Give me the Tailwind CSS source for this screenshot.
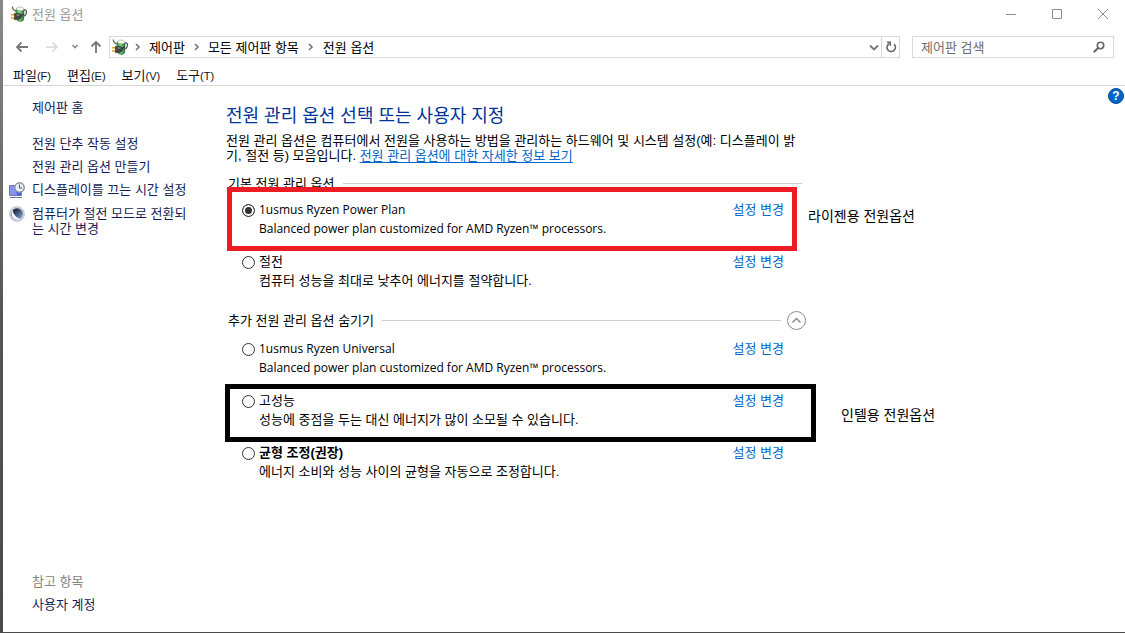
<!DOCTYPE html>
<html lang="ko">
<head>
  <meta charset="UTF-8" />
  <meta name="viewport" content="width=device-width, initial-scale=1.0" />
  <title>전원 옵션</title>
  <script src="https://cdn.jsdelivr.net/npm/@tailwindcss/browser@4"></script>
</head>
<body class="bg-[#5c5c5c] text-black font-['Liberation_Sans','Noto_Sans_CJK_KR',sans-serif] text-[13px] leading-[15px]">
  <!-- Shared icon -->
  <svg class="absolute size-0" aria-hidden="true">
    <defs>
      <linearGradient id="battery" x1="0" y1="0" x2="1" y2="0"><stop offset="0" stop-color="#2b9b3a" /><stop offset=".4" stop-color="#7fe287" /><stop offset="1" stop-color="#17722a" /></linearGradient>
      <linearGradient id="moon" x1="0" y1="0" x2="1" y2="1"><stop offset=".3" stop-color="#2b3350" /><stop offset="1" stop-color="#8fb4ea" /></linearGradient>
    </defs>
    <symbol id="power" viewBox="0 0 16 16">
      <path d="M12.500 4c3-.5 3.500 1.500 2.500 4-.5 1.500-1.500 2.500-3 2.500" fill="none" stroke="#555" stroke-width="1.200" />
      <path d="M5 3l8 .500-.500 10.500c-1.500 1.800-5 1.800-6.500 0z" fill="url(#battery)" stroke="#2a5a33" stroke-width=".7" />
      <path d="M5 3c.5-2.500 7-3 8 .500-1.500 1.800-6 1.800-8-.500z" fill="#f1f6f2" stroke="#8fa094" stroke-width=".6" />
      <path d="M1.200.500C1.500 3 3 4.500 5 5.500" fill="none" stroke="#666" stroke-width="1.200" />
      <path d="M0 8.700h5M0 12h5" stroke="#dfa020" stroke-width="1.500" />
      <path d="M3.500 7.200l2 .3c3-.8 5 .5 5 2.700s-2 3.800-5 3.200l-2 .3z" fill="#454545" stroke="#222" stroke-width=".5" />
      <path d="M5.500 9h3" stroke="#a5a5a5" stroke-width="1" />
      <path d="M10 9.500l3-1.500" stroke="#333" stroke-width="1.300" />
    </symbol>
  </svg>

  <div class="min-h-screen flex flex-col pl-[3px] pb-px bg-linear-to-b from-[#8a8a8a] via-[#555] to-[#4a4a4a]">
    <div class="flex-1 flex flex-col bg-white">

      <!-- Title bar -->
      <header class="h-7 flex items-center justify-between pl-2 pr-4 text-[#999]">
        <div class="flex items-center gap-[5px]">
          <svg class="size-4"><use href="#power" /></svg>
          <h1>전원 옵션</h1>
        </div>
        <div class="flex items-center gap-[34px]">
          <button aria-label="최소화"><svg class="size-3" viewBox="0 0 12 12" fill="none" stroke="#8c8c8c"><path d="M1 6.500h10" /></svg></button>
          <button aria-label="최대화"><svg class="size-3" viewBox="0 0 12 12" fill="none" stroke="#8c8c8c"><path d="M1.500 1.500h9v9h-9z" /></svg></button>
          <button aria-label="닫기"><svg class="size-3" viewBox="0 0 12 12" fill="none" stroke="#8c8c8c"><path d="M1 1l10 10M11 1L1 11" /></svg></button>
        </div>
      </header>

      <!-- Navigation -->
      <div class="h-[38px] flex items-center pl-3 pr-[11px]">
        <div class="flex items-center">
          <button aria-label="뒤로"><svg class="size-3.5" viewBox="0 0 14 14" fill="none" stroke="#777" stroke-width="1.800"><path d="M13 7H2M6.500 2.500L2 7l4.500 4.500" /></svg></button>
          <button class="ml-4" aria-label="앞으로"><svg class="size-3.5" viewBox="0 0 14 14" fill="none" stroke="#d6d6d6" stroke-width="1.500"><path d="M1 7h11M7.500 2.500L12 7l-4.500 4.500" /></svg></button>
          <button class="ml-3" aria-label="최근 위치"><svg class="size-2" viewBox="0 0 8 8" fill="none" stroke="#888" stroke-width="1.600"><path d="M1.500 2L4 4.500 6.500 2" /></svg></button>
          <button class="ml-2.5" aria-label="위로"><svg class="size-3.5" viewBox="0 0 14 14" fill="none" stroke="#777" stroke-width="1.800"><path d="M7 13V2M2.500 6.500L7 2l4.500 4.500" /></svg></button>
        </div>
        <nav class="ml-1.5 flex-1 h-[22px] flex items-center border border-[#d9d9d9] pl-0.5">
          <svg class="size-4"><use href="#power" /></svg>
          <svg class="ml-1.5 size-2" viewBox="0 0 8 8" fill="none" stroke="#777" stroke-width="1.600"><path d="M2 1l3 3-3 3" /></svg>
          <a href="#" class="ml-[7px]">제어판</a>
          <svg class="ml-2 size-2" viewBox="0 0 8 8" fill="none" stroke="#777" stroke-width="1.600"><path d="M2 1l3 3-3 3" /></svg>
          <a href="#" class="ml-[7px]">모든 제어판 항목</a>
          <svg class="ml-2 size-2" viewBox="0 0 8 8" fill="none" stroke="#777" stroke-width="1.600"><path d="M2 1l3 3-3 3" /></svg>
          <a href="#" class="ml-2">전원 옵션</a>
          <button class="ml-auto mr-0.5" aria-label="주소 목록"><svg class="size-2.5" viewBox="0 0 10 10" fill="none" stroke="#777" stroke-width="1.900"><path d="M1 3.500l4 4 4-4" /></svg></button>
          <button class="h-full w-[18px] flex items-center justify-center border-l border-[#d9d9d9]" aria-label="새로 고침"><svg class="size-3" viewBox="0 0 12 12" fill="none" stroke="#666" stroke-width="1.600"><path d="M9 3.200A4.200 4.200 0 1 1 4 2.800" /><path d="M2 1.300h3.200v3.500" /></svg></button>
        </nav>
        <label class="ml-3 w-[202px] h-[22px] flex items-center border border-[#d9d9d9] pl-2 pr-2">
          <input type="text" placeholder="제어판 검색" aria-label="제어판 검색" class="min-w-0 flex-1 outline-none placeholder:text-[#6d6d6d]" />
          <svg class="size-3" viewBox="0 0 12 12" fill="none" stroke="#666" stroke-width="1.600"><circle cx="7.500" cy="4.500" r="3.200" /><path d="M5 7L.8 11.200" stroke-width="2" /></svg>
        </label>
      </div>

      <!-- Menu -->
      <div class="h-5 flex items-center gap-4 pl-2.5 border-b border-[#d7d7d7] text-[#111]">
        <button>파일<span class="text-[11px]">(F)</span></button>
        <button>편집<span class="text-[11px]">(E)</span></button>
        <button>보기<span class="text-[11px]">(V)</span></button>
        <button>도구<span class="text-[11px]">(T)</span></button>
      </div>

      <div class="relative flex-1 flex">
        <!-- Sidebar -->
        <aside class="w-[223px] shrink-0 flex flex-col pl-[29px] pr-[34px] pt-[14px] pb-5 text-[#151c55] break-all">
          <a href="#">제어판 홈</a>
          <ul class="mt-[21px] space-y-2">
            <li><a href="#">전원 단추 작동 설정</a></li>
            <li><a href="#">전원 관리 옵션 만들기</a></li>
            <li class="-ml-[23px] flex gap-[7px]">
              <svg class="size-4 shrink-0" viewBox="0 0 16 16">
                <path d="M.500 3.500h12v10H.500z" fill="#4a5fe0" stroke="#6f7aa8" />
                <path d="M1 13V4h5l2 9z" fill="#8793f2" />
                <path d="M1 15.500h12" stroke="#6d7ba8" />
                <circle cx="10.500" cy="5.500" r="4.700" fill="#eceff2" stroke="#8b949c" stroke-width="1.500" />
                <path d="M10.500 2.500V6H13" fill="none" stroke="#4a545e" />
              </svg>
              <a href="#" class="-mr-1">디스플레이를 끄는 시간 설정</a>
            </li>
            <li class="-ml-[23px] flex gap-[7px]">
              <svg class="size-4 shrink-0" viewBox="0 0 16 16">
                <circle cx="8" cy="8" r="7.500" fill="#ccd4dd" stroke="#bcc4cd" stroke-width=".8" />
                <circle cx="8" cy="8" r="5.800" fill="url(#moon)" />
                <path d="M3.500 4C1.500 7 2.500 12 6.500 13.500c2 .7 4 .2 5-.500C7.500 12 4.500 8.500 3.500 4z" fill="#f3f6fa" />
              </svg>
              <a href="#">컴퓨터가 절전 모드로 전환되는 시간 변경</a>
            </li>
          </ul>
          <div class="mt-auto space-y-2">
            <h2 class="text-[#858585]">참고 항목</h2>
            <a href="#" class="block">사용자 계정</a>
          </div>
        </aside>

        <!-- Power plans -->
        <main class="w-[576px] pt-5 pb-5">
          <h2 class="text-lg leading-5 text-[#003399]">전원 관리 옵션 선택 또는 사용자 지정</h2>
          <p class="mt-[7px] break-all">전원 관리 옵션은 컴퓨터에서 전원을 사용하는 방법을 관리하는 하드웨어 및 시스템 설정(예: 디스플레이 밝<wbr />기, 절전 등) 모음입니다. <a href="#" class="text-[#0066cc] underline underline-offset-2">전원 관리 옵션에 대한 자세한 정보 보기</a></p>

          <section>
            <div class="mt-[13px] flex items-center gap-2 pl-0.5">
              <h3>기본 전원 관리 옵션</h3>
              <div class="flex-1 h-px bg-[#cdcdcd]"></div>
            </div>
            <div class="mt-[11px] space-y-[18px]">
              <div class="relative pl-4 pr-[18px]">
                <div class="flex justify-between">
                  <label class="flex items-center gap-1"><input type="radio" name="plan" checked class="mt-0.5 size-[13px] appearance-none rounded-full border border-[#333] checked:bg-[#333] checked:shadow-[inset_0_0_0_2px_white]" /><span class="font-['Open_Sans'] text-xs leading-[15px]">1usmus Ryzen Power Plan</span></label>
                  <a href="#" class="text-[#0066cc]">설정 변경</a>
                </div>
                <p class="mt-1 pl-[17px] font-['Open_Sans'] text-xs leading-[15px]">Balanced power plan customized for AMD Ryzen™ processors.</p>
                <div class="absolute -top-[15px] -bottom-[15px] left-px right-[5px] border-5 border-[#ed1c24] pointer-events-none"></div>
                <span class="absolute left-full top-[7px] ml-1.5 whitespace-nowrap text-sm leading-[15px]">라이젠용 전원옵션</span>
              </div>
              <div class="pl-4 pr-[18px]">
                <div class="flex justify-between">
                  <label class="flex items-center gap-1"><input type="radio" name="plan" class="mt-0.5 size-[13px] appearance-none rounded-full border border-[#333] checked:bg-[#333] checked:shadow-[inset_0_0_0_2px_white]" /><span>절전</span></label>
                  <a href="#" class="text-[#0066cc]">설정 변경</a>
                </div>
                <p class="mt-1 pl-[17px]">컴퓨터 성능을 최대로 낮추어 에너지를 절약합니다.</p>
              </div>
            </div>
          </section>

          <section>
            <div class="mt-[25px] -mr-1 h-[15px] flex items-center gap-2 pl-0.5">
              <h3>추가 전원 관리 옵션 숨기기</h3>
              <div class="flex-1 h-px bg-[#cdcdcd]"></div>
              <button class="-ml-0.5" aria-label="추가 전원 관리 옵션 숨기기"><svg class="size-[19px]" viewBox="0 0 19 19" fill="none" stroke="#8c8c8c"><circle cx="9.500" cy="9.500" r="9" /><path d="M5.500 11.500l4-4 4 4" stroke-width="1.500" /></svg></button>
            </div>
            <div class="mt-[13px] space-y-[18px]">
              <div class="pl-4 pr-[18px]">
                <div class="flex justify-between">
                  <label class="flex items-center gap-1"><input type="radio" name="plan" class="mt-0.5 size-[13px] appearance-none rounded-full border border-[#333] checked:bg-[#333] checked:shadow-[inset_0_0_0_2px_white]" /><span class="font-['Open_Sans'] text-xs leading-[15px]">1usmus Ryzen Universal</span></label>
                  <a href="#" class="text-[#0066cc]">설정 변경</a>
                </div>
                <p class="mt-1 pl-[17px] font-['Open_Sans'] text-xs leading-[15px]">Balanced power plan customized for AMD Ryzen™ processors.</p>
              </div>
              <div class="relative pl-4 pr-[18px]">
                <div class="flex justify-between">
                  <label class="flex items-center gap-1"><input type="radio" name="plan" class="mt-0.5 size-[13px] appearance-none rounded-full border border-[#333] checked:bg-[#333] checked:shadow-[inset_0_0_0_2px_white]" /><span>고성능</span></label>
                  <a href="#" class="text-[#0066cc]">설정 변경</a>
                </div>
                <p class="mt-1 pl-[17px]">성능에 중점을 두는 대신 에너지가 많이 소모될 수 있습니다.</p>
                <div class="absolute -top-[9px] -bottom-[15px] -left-px -right-3.5 border-5 border-black pointer-events-none"></div>
                <span class="absolute left-full top-[15px] ml-[39px] whitespace-nowrap text-sm leading-[15px]">인텔용 전원옵션</span>
              </div>
              <div class="pl-4 pr-[18px]">
                <div class="flex justify-between">
                  <label class="flex items-center gap-1"><input type="radio" name="plan" class="mt-0.5 size-[13px] appearance-none rounded-full border border-[#333] checked:bg-[#333] checked:shadow-[inset_0_0_0_2px_white]" /><span class="font-bold">균형 조정(권장)</span></label>
                  <a href="#" class="text-[#0066cc]">설정 변경</a>
                </div>
                <p class="mt-1 pl-[17px]">에너지 소비와 성능 사이의 균형을 자동으로 조정합니다.</p>
              </div>
            </div>
          </section>
        </main>

        <button class="absolute top-0.5 right-px size-4 rounded-full border border-[#0a4a94] bg-[#0066cc] text-white text-xs leading-[14px] font-bold text-center" aria-label="도움말">?</button>
      </div>
    </div>
  </div>
</body>
</html>
